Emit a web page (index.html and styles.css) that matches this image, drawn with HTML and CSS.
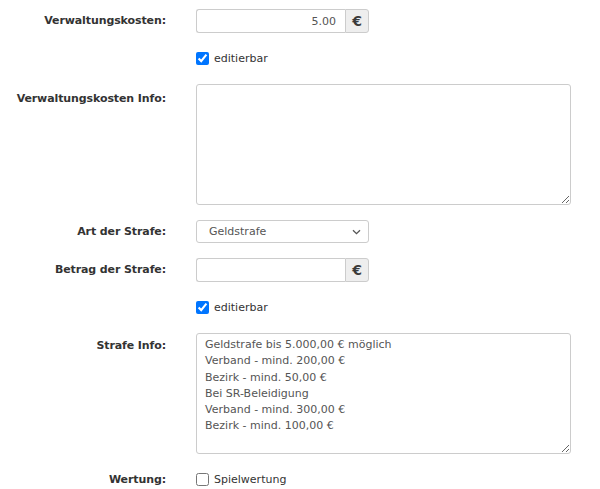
FILE: index.html
```html
<!DOCTYPE html>
<html lang="de">
<head>
<meta charset="utf-8">
<title>Strafe</title>
<link rel="stylesheet" href="styles.css">
</head>
<body>
<form class="form">
  <div class="row">
    <label class="label">Verwaltungskosten:</label>
    <div class="control">
      <div class="input-group">
        <input class="input input-right" type="text" value="5.00">
        <span class="addon">€</span>
      </div>
    </div>
  </div>
  <div class="row row-check">
    <span class="label"></span>
    <div class="control">
      <label class="check"><input type="checkbox" checked> editierbar</label>
    </div>
  </div>
  <div class="row row-top">
    <label class="label label-top">Verwaltungskosten Info:</label>
    <div class="control">
      <textarea class="textarea"></textarea>
    </div>
  </div>
  <div class="row">
    <label class="label">Art der Strafe:</label>
    <div class="control">
      <div class="select">
        <span class="select-text">Geldstrafe</span>
        <svg class="chevron" width="9" height="6" viewBox="0 0 9 6"><path d="M1 1.2l3.5 3.5 3.5-3.5" fill="none" stroke="#555" stroke-width="1.3"/></svg>
      </div>
    </div>
  </div>
  <div class="row">
    <label class="label">Betrag der Strafe:</label>
    <div class="control">
      <div class="input-group">
        <input class="input input-right" type="text" value="">
        <span class="addon">€</span>
      </div>
    </div>
  </div>
  <div class="row row-check">
    <span class="label"></span>
    <div class="control">
      <label class="check"><input type="checkbox" checked> editierbar</label>
    </div>
  </div>
  <div class="row row-top">
    <label class="label label-top2">Strafe Info:</label>
    <div class="control">
      <textarea class="textarea">Geldstrafe bis 5.000,00 € möglich
Verband - mind. 200,00 €
Bezirk - mind. 50,00 €
Bei SR-Beleidigung
Verband - mind. 300,00 €
Bezirk - mind. 100,00 €</textarea>
    </div>
  </div>
  <div class="row row-check">
    <label class="label label-check">Wertung:</label>
    <div class="control">
      <label class="check"><input type="checkbox"> Spielwertung</label>
    </div>
  </div>
</form>
</body>
</html>
```

FILE: styles.css
```css
html, body {
  margin: 0;
  padding: 0;
  background: #fff;
}
body {
  font-family: "DejaVu Sans", Verdana, sans-serif;
  font-size: 11px;
  color: #333;
}
.form {
  padding-top: 9px;
  display: flex;
  flex-direction: column;
  gap: 15px;
}
.row {
  display: grid;
  grid-template-columns: 166px 375px;
  column-gap: 30px;
  align-items: center;
}
.row-top {
  align-items: start;
}
.row-check {
  align-items: start;
  height: 21px;
}
.label {
  text-align: right;
  font-weight: bold;
  color: #333;
  line-height: 16px;
  letter-spacing: -0.1px;
}
.label-top {
  padding-top: 7px;
}
.label-top2 {
  padding-top: 5px;
}
.label-check {
  padding-top: 3px;
}
.control {
  display: flex;
}
.input-group {
  display: flex;
  width: 173px;
  height: 24px;
  box-sizing: border-box;
}
.input {
  flex: 1;
  min-width: 0;
  height: 24px;
  box-sizing: border-box;
  border: 1px solid #ccc;
  border-right: none;
  border-radius: 3px 0 0 3px;
  padding: 0 9px;
  font-family: "DejaVu Sans", Verdana, sans-serif;
  font-size: 11px;
  color: #555;
  background: #fff;
  outline: none;
}
.input-right {
  text-align: right;
}
.addon {
  width: 24px;
  box-sizing: border-box;
  border: 1px solid #ccc;
  border-radius: 0 3px 3px 0;
  background: #eee;
  display: flex;
  align-items: center;
  justify-content: center;
  font-size: 14px;
  font-weight: bold;
  color: #3a3a3a;
}
.check {
  display: flex;
  align-items: center;
  gap: 5px;
  color: #333;
  font-size: 11px;
  height: 21px;
}
.check input {
  margin: 0;
  width: 13px;
  height: 13px;
}
.textarea {
  width: 375px;
  height: 121px;
  box-sizing: border-box;
  border: 1px solid #ccc;
  border-radius: 3px;
  padding: 3px 8px;
  font-family: "DejaVu Sans", Verdana, sans-serif;
  font-size: 11px;
  line-height: 16.3px;
  color: #555;
  resize: vertical;
  outline: none;
  margin: 0;
  display: block;
}
.select {
  width: 173px;
  height: 23px;
  box-sizing: border-box;
  border: 1px solid #ccc;
  border-radius: 3px;
  display: flex;
  align-items: center;
  justify-content: space-between;
  padding: 0 7px 0 12px;
  color: #555;
}
.chevron {
  display: block;
}
```
